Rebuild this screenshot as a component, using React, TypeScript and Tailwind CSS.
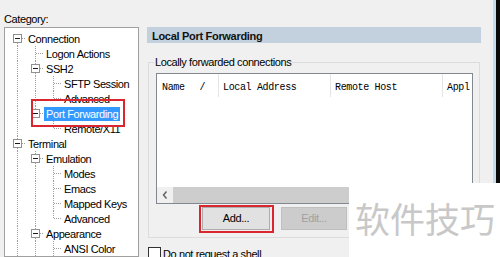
import React from "react";

type Row = {
  label: string;
  anc: boolean[];
  first?: boolean;
  last?: boolean;
  box?: boolean;
  selected?: boolean;
};

const rows: Row[] = [
  { label: "Connection", anc: [], first: true, box: true },
  { label: "Logon Actions", anc: [true] },
  { label: "SSH2", anc: [true], box: true },
  { label: "SFTP Session", anc: [true, true] },
  { label: "Advanced", anc: [true, true], last: true },
  { label: "Port Forwarding", anc: [true], last: true, box: true, selected: true },
  { label: "Remote/X11", anc: [true, false], last: true },
  { label: "Terminal", anc: [], box: true },
  { label: "Emulation", anc: [true], box: true },
  { label: "Modes", anc: [true, true] },
  { label: "Emacs", anc: [true, true] },
  { label: "Mapped Keys", anc: [true, true] },
  { label: "Advanced", anc: [true, true], last: true },
  { label: "Appearance", anc: [true], box: true },
  { label: "ANSI Color", anc: [true, true] },
];

const DOT = "#a0a0a0";

function AncCell({ on }: { on: boolean }) {
  return (
    <svg width="18" height="15" className="shrink-0">
      {on && <line x1="9.5" y1="0" x2="9.5" y2="15" stroke={DOT} strokeDasharray="1 1" />}
    </svg>
  );
}

function LinkCell({ first, last, box }: { first?: boolean; last?: boolean; box?: boolean }) {
  return (
    <svg width="18" height="15" className="shrink-0">
      {!first && <line x1="9.5" y1="0" x2="9.5" y2="7" stroke={DOT} strokeDasharray="1 1" />}
      {!last && <line x1="9.5" y1="8" x2="9.5" y2="15" stroke={DOT} strokeDasharray="1 1" />}
      <line x1="10" y1="7.5" x2="18" y2="7.5" stroke={DOT} strokeDasharray="1 1" />
      {box && (
        <>
          <rect x="5.5" y="3.5" width="8" height="8" fill="#fff" stroke="#919191" />
          <line x1="7" y1="7.5" x2="12" y2="7.5" stroke="#1a1a1a" />
        </>
      )}
    </svg>
  );
}

function TreeRow({ row }: { row: Row }) {
  return (
    <div className="flex h-[15px] items-center">
      {row.anc.map((on, i) => (
        <AncCell key={i} on={on} />
      ))}
      <LinkCell first={row.first} last={row.last} box={row.box} />
      <span
        className={
          row.selected
            ? "px-[2px] leading-[14px] bg-[#3399ff] text-white whitespace-nowrap"
            : "px-[2px] leading-[14px] text-black whitespace-nowrap"
        }
      >
        {row.label}
      </span>
    </div>
  );
}

export default function App() {
  return (
    <div className="relative flex w-[500px] h-[257px] overflow-hidden bg-[#f0f0f0] font-['Liberation_Sans',Arial,sans-serif] text-[11px] tracking-[-0.4px] text-black">
      {/* left: category tree */}
      <div className="flex w-[147px] shrink-0 flex-col pl-[4px]">
        <div className="h-[30px] pt-[12px] leading-[14px]">Category:</div>
        <div className="relative w-[135px] flex-1 border border-[#a0a0a0] bg-white pl-[3px] pt-[3px]">
          {rows.map((r, i) => (
            <TreeRow key={i} row={r} />
          ))}
          <div className="absolute left-[26px] top-[71px] h-[28px] w-[94px] border-2 border-[#d9262f]" />
        </div>
      </div>

      {/* right: port forwarding page */}
      <div className="flex w-[334px] shrink-0 flex-col pt-[27px]">
        <div className="h-[16px] bg-[#c3d1de] pl-[5px] pt-[1px] font-bold leading-[16px] tracking-[-0.3px] text-[#111]">
          Local Port Forwarding
        </div>

        <fieldset className="ml-[1px] mt-[12px] w-[332px] border border-[#dcdcdc] pb-[7px]">
          <legend className="ml-[5px] px-[1px] leading-[14px]">Locally forwarded connections</legend>

          <div className="ml-[7px] mt-[4px] flex h-[131px] w-[317px] flex-col border border-[#828790] bg-white">
            <div className="flex h-[23px] font-['Liberation_Mono',monospace] text-[10px] tracking-[-0.35px] text-black">
              <div className="flex h-full w-[62px] items-center border-r border-[#e5e5e5] pl-[5px] pt-[3px]">
                <span>Name</span>
                <span className="ml-[15px]">/</span>
              </div>
              <div className="flex h-full w-[112px] items-center border-r border-[#e5e5e5] pl-[4px] pt-[3px]">Local Address</div>
              <div className="flex h-full w-[112px] items-center border-r border-[#e5e5e5] pl-[4px] pt-[3px]">Remote Host</div>
              <div className="flex h-full flex-1 items-center overflow-hidden whitespace-nowrap pl-[4px] pt-[3px]">Appl</div>
            </div>
            <div className="flex-1" />
            <div className="flex h-[16px]">
              <div className="flex w-[16px] items-center justify-center bg-[#f0f0f0]">
                <svg width="6" height="8" viewBox="0 0 6 8">
                  <polyline points="4.5,0.5 1.5,4 4.5,7.5" fill="none" stroke="#606060" strokeWidth="1.4" />
                </svg>
              </div>
              <div className="flex-1 bg-[#cdcdcd]" />
            </div>
          </div>

          <div className="ml-[53px] mt-[3px] flex gap-[11px]">
            <div className="relative">
              <button className="h-[23px] w-[68px] border border-[#adadad] bg-[#e1e1e1] leading-[21px] text-black">
                Add...
              </button>
              <div className="absolute -left-[3px] -right-[4px] -top-[2px] -bottom-[3px] border-2 border-[#d9262f]" />
            </div>
            <button className="h-[23px] w-[66px] border border-[#bfbfbf] bg-[#cccccc] leading-[21px] text-[#a0a0a0]">
              Edit...
            </button>
          </div>
        </fieldset>

        <div className="mt-[9px] flex items-start gap-[2px] pl-[1px]">
          <div className="h-[13px] w-[13px] shrink-0 border border-[#333] bg-white" />
          <span className="leading-[14px]">Do not request a shell</span>
        </div>
      </div>

      {/* window edge */}
      <div className="w-[12px] shrink-0" />
      <div className="w-[3px] shrink-0 bg-[#c4dcf0]" />
      <div className="flex-1 bg-[#0a0a0a]" />

      {/* watermark */}
      <div className="absolute left-[349px] top-[183px] right-0 bottom-0 bg-white pl-[6px] pt-[15px] font-['Noto_Sans_CJK_SC',sans-serif] text-[35px] leading-[40px] tracking-normal text-[#c8c8c8]">
        软件技巧
      </div>
    </div>
  );
}
